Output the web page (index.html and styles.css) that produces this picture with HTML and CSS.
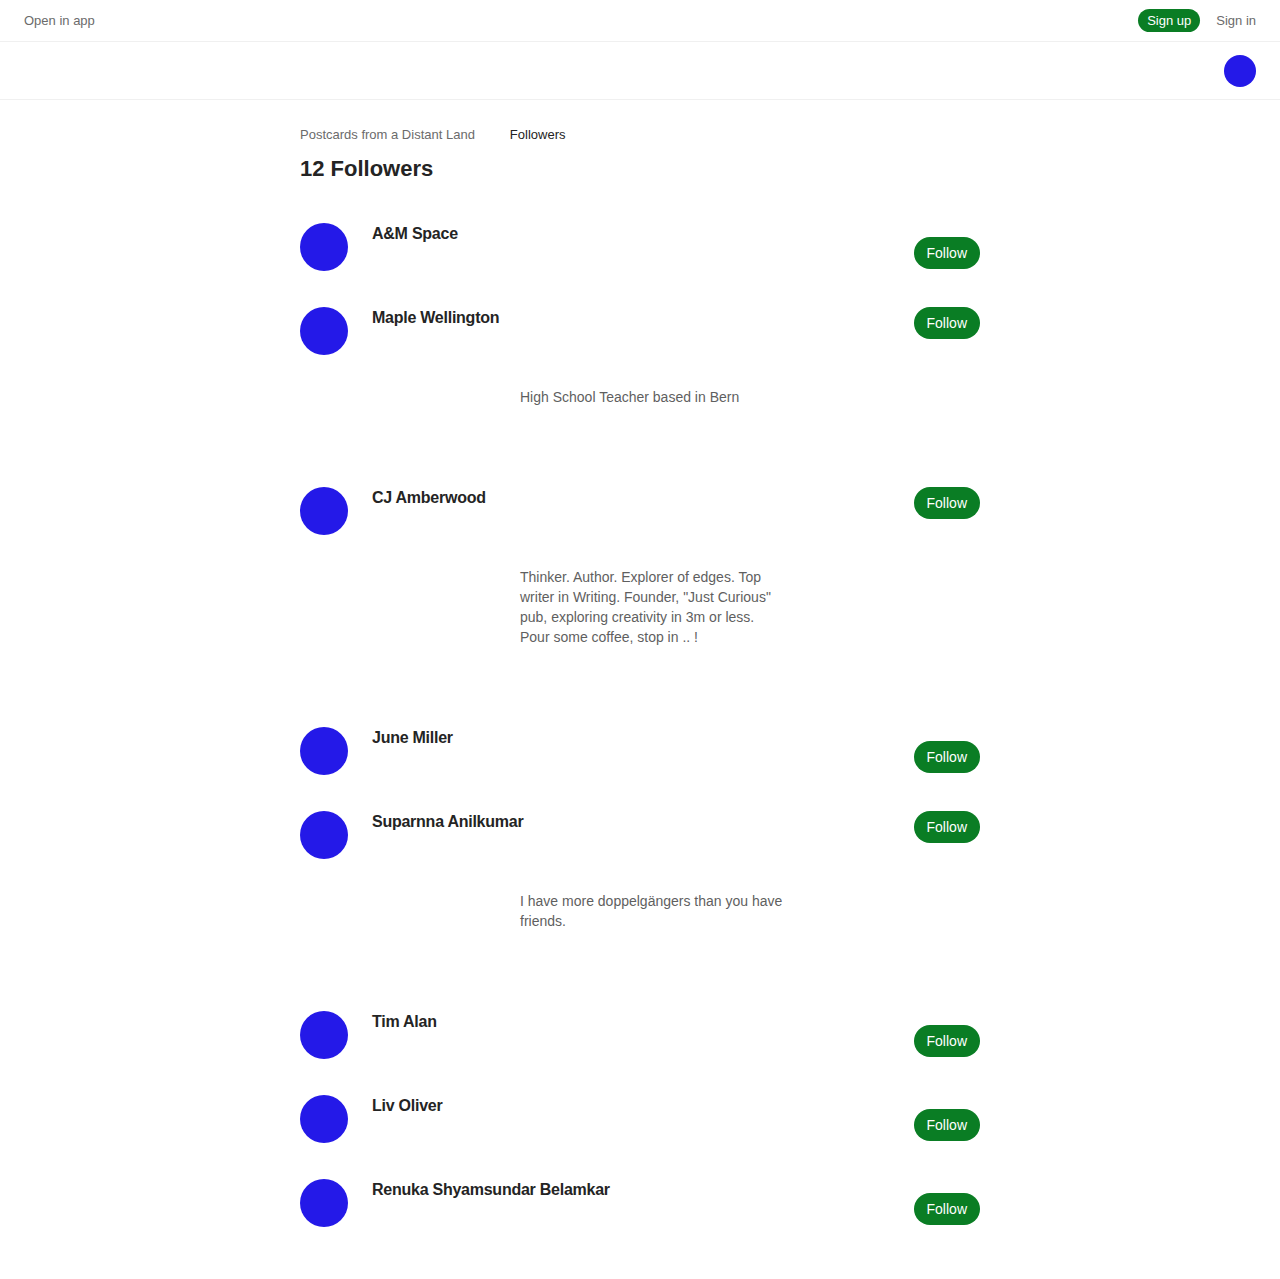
FILE: index.html
```html
<!DOCTYPE html>
<html>
<head>
<meta charset="utf-8">
<link rel="stylesheet" href="styles.css">
</head>
<body>
<div class="topbar">
  <span class="open-app">Open in app</span>
  <div class="auth">
    <span class="signup">Sign up</span>
    <span class="signin">Sign in</span>
  </div>
</div>
<div class="navbar">
  <div class="nav-avatar"></div>
</div>
<main class="main">
  <div class="crumbs">
    <span class="crumb-pub">Postcards from a Distant Land</span>
    <span class="crumb-cur">Followers</span>
  </div>
  <h1 class="title">12 Followers</h1>
  <div class="list">
    <div class="item">
      <div class="item-main"><div class="avatar"></div><div class="name">A&amp;M Space</div><span class="follow low">Follow</span></div>
    </div>
    <div class="item has-bio">
      <div class="item-main"><div class="avatar"></div><div class="name">Maple Wellington</div><span class="follow">Follow</span></div>
      <p class="bio">High School Teacher based in Bern</p>
    </div>
    <div class="item has-bio">
      <div class="item-main"><div class="avatar"></div><div class="name">CJ Amberwood</div><span class="follow">Follow</span></div>
      <p class="bio">Thinker. Author. Explorer of edges. Top writer in Writing. Founder, "Just Curious" pub, exploring creativity in 3m or less. Pour some coffee, stop in .. !</p>
    </div>
    <div class="item">
      <div class="item-main"><div class="avatar"></div><div class="name">June Miller</div><span class="follow low">Follow</span></div>
    </div>
    <div class="item has-bio">
      <div class="item-main"><div class="avatar"></div><div class="name">Suparnna Anilkumar</div><span class="follow">Follow</span></div>
      <p class="bio">I have more doppelgängers than you have friends.</p>
    </div>
    <div class="item">
      <div class="item-main"><div class="avatar"></div><div class="name">Tim Alan</div><span class="follow low">Follow</span></div>
    </div>
    <div class="item">
      <div class="item-main"><div class="avatar"></div><div class="name">Liv Oliver</div><span class="follow low">Follow</span></div>
    </div>
    <div class="item">
      <div class="item-main"><div class="avatar"></div><div class="name">Renuka Shyamsundar Belamkar</div><span class="follow low">Follow</span></div>
    </div>
  </div>
</main>
</body>
</html>
```

FILE: styles.css
```css
* { box-sizing: border-box; }
body {
  margin: 0;
  font-family: "Liberation Sans", Arial, Helvetica, sans-serif;
  color: #242424;
  background: #fff;
}
.topbar {
  height: 42px;
  border-bottom: 1px solid #f0f0f0;
  display: flex;
  align-items: center;
  justify-content: space-between;
  padding: 0 24px;
  font-size: 13px;
}
.open-app { color: #6b6b6b; margin-top: -1px; }
.auth { display: flex; align-items: center; gap: 16px; margin-top: -1px; }
.signup {
  background: #0a7d24;
  color: #fff;
  border-radius: 12px;
  height: 23px;
  line-height: 23px;
  padding: 0 9px;
  font-size: 13px;
}
.signin { color: #6b6b6b; }
.navbar {
  height: 58px;
  border-bottom: 1px solid #f0f0f0;
  display: flex;
  align-items: center;
  justify-content: flex-end;
  padding: 0 24px;
}
.nav-avatar {
  width: 32px;
  height: 32px;
  border-radius: 50%;
  background: #2419e8;
  margin-top: 1px;
}
.main {
  width: 680px;
  margin: 0 auto;
  padding-top: 25px;
}
.crumbs {
  display: flex;
  gap: 35px;
  font-size: 13px;
  line-height: 20px;
}
.crumb-pub { color: #6b6b6b; }
.crumb-cur { color: #242424; }
.title {
  margin: 10px 0 40px;
  font-size: 22px;
  line-height: 28px;
  font-weight: 700;
  color: #242424;
}
.item { padding-bottom: 36px; }
.item.has-bio { padding-bottom: 80px; }
.item-main {
  display: flex;
  align-items: flex-start;
}
.avatar {
  width: 48px;
  height: 48px;
  border-radius: 50%;
  background: #2419e8;
  flex: none;
}
.name {
  flex: 1;
  margin-left: 24px;
  padding-top: 1px;
  font-size: 16px;
  line-height: 20px;
  font-weight: 700;
  letter-spacing: -0.25px;
  color: #242424;
}
.follow {
  background: #0a7d24;
  color: #fff;
  font-size: 14px;
  height: 32px;
  line-height: 32px;
  padding: 0 13px;
  border-radius: 16px;
  flex: none;
}
.follow.low { margin-top: 14px; }
.bio {
  margin: 32px 0 0 220px;
  width: 265px;
  font-size: 14px;
  line-height: 20px;
  color: #5f5f5f;
}
```
